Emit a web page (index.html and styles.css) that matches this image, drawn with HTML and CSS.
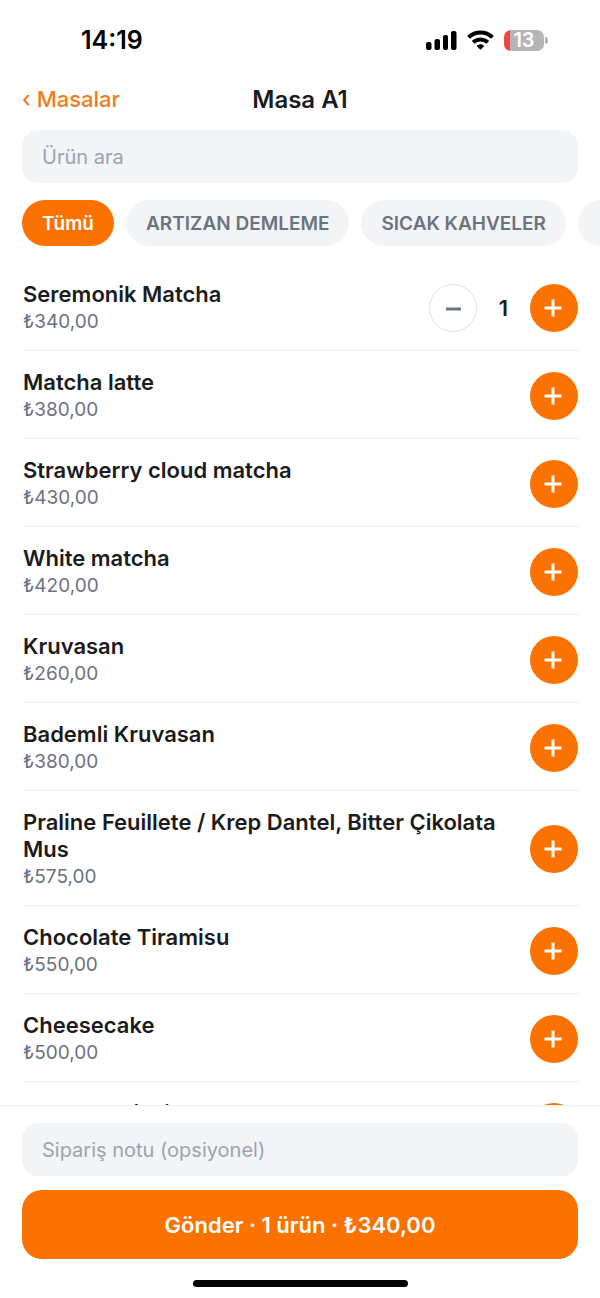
FILE: index.html
```html
<!DOCTYPE html>
<html lang="tr">
<head>
  <meta charset="UTF-8">
  <meta name="viewport" content="width=device-width, initial-scale=1">
  <title>Masa A1</title>
  <link rel="stylesheet" href="styles.css">
</head>
<body>
  <div class="app">
    <!-- Status bar -->
    <div class="status-bar">
      <span class="clock">14:19</span>
      <div class="status-icons">
        <svg width="31" height="20" viewBox="0 0 31 20" aria-hidden="true">
          <rect x="0" y="12" width="5.5" height="8" rx="2"/>
          <rect x="8.5" y="9" width="5.5" height="11" rx="2"/>
          <rect x="17" y="5" width="5" height="15" rx="2"/>
          <rect x="25" y="1" width="5.5" height="19" rx="2"/>
        </svg>
        <svg width="27" height="20" viewBox="0 0 27 20" aria-hidden="true">
          <g fill="none" stroke="#000" stroke-width="4">
            <path d="M1.6 7.4a17 17 0 0 1 23.8 0"/>
            <path d="M6.2 12.4a10.4 10.4 0 0 1 14.6 0"/>
          </g>
          <path d="M13.5 19.8 9.6 15.9a5.6 5.6 0 0 1 7.8 0z"/>
        </svg>
        <div class="battery">
          <span class="battery-body">13</span>
          <span class="battery-cap"></span>
        </div>
      </div>
    </div>

    <!-- Header -->
    <header class="header">
      <a href="#" class="back">‹ Masalar</a>
      <h1>Masa A1</h1>
    </header>

    <div class="search">
      <input type="search" class="field" placeholder="Ürün ara" aria-label="Ürün ara">
    </div>

    <!-- Categories -->
    <nav class="categories">
      <button type="button" class="chip active">Tümü</button>
      <button type="button" class="chip">ARTIZAN DEMLEME</button>
      <button type="button" class="chip">SICAK KAHVELER</button>
      <button type="button" class="chip" aria-label="Diğer"></button>
    </nav>

    <!-- Products -->
    <ul class="products">
      <li class="product">
        <div class="info">
          <h2>Seremonik Matcha</h2>
          <p>₺340,00</p>
        </div>
        <div class="counter">
          <button type="button" class="round minus" aria-label="Azalt"><svg width="16" height="18" viewBox="0 0 16 18"><path d="M1 10h15"/></svg></button>
          <span class="count">1</span>
          <button type="button" class="round plus" aria-label="Ekle"><svg width="20" height="18" viewBox="0 0 20 18"><path d="M.5 9h17M9 .5v17"/></svg></button>
        </div>
      </li>
      <li class="product">
        <div class="info">
          <h2>Matcha latte</h2>
          <p>₺380,00</p>
        </div>
        <button type="button" class="round plus" aria-label="Ekle"><svg width="20" height="18" viewBox="0 0 20 18"><path d="M.5 9h17M9 .5v17"/></svg></button>
      </li>
      <li class="product">
        <div class="info">
          <h2>Strawberry cloud matcha</h2>
          <p>₺430,00</p>
        </div>
        <button type="button" class="round plus" aria-label="Ekle"><svg width="20" height="18" viewBox="0 0 20 18"><path d="M.5 9h17M9 .5v17"/></svg></button>
      </li>
      <li class="product">
        <div class="info">
          <h2>White matcha</h2>
          <p>₺420,00</p>
        </div>
        <button type="button" class="round plus" aria-label="Ekle"><svg width="20" height="18" viewBox="0 0 20 18"><path d="M.5 9h17M9 .5v17"/></svg></button>
      </li>
      <li class="product">
        <div class="info">
          <h2>Kruvasan</h2>
          <p>₺260,00</p>
        </div>
        <button type="button" class="round plus" aria-label="Ekle"><svg width="20" height="18" viewBox="0 0 20 18"><path d="M.5 9h17M9 .5v17"/></svg></button>
      </li>
      <li class="product">
        <div class="info">
          <h2>Bademli Kruvasan</h2>
          <p>₺380,00</p>
        </div>
        <button type="button" class="round plus" aria-label="Ekle"><svg width="20" height="18" viewBox="0 0 20 18"><path d="M.5 9h17M9 .5v17"/></svg></button>
      </li>
      <li class="product">
        <div class="info">
          <h2>Praline Feuillete / Krep Dantel, Bitter Çikolata Mus</h2>
          <p>₺575,00</p>
        </div>
        <button type="button" class="round plus" aria-label="Ekle"><svg width="20" height="18" viewBox="0 0 20 18"><path d="M.5 9h17M9 .5v17"/></svg></button>
      </li>
      <li class="product">
        <div class="info">
          <h2>Chocolate Tiramisu</h2>
          <p>₺550,00</p>
        </div>
        <button type="button" class="round plus" aria-label="Ekle"><svg width="20" height="18" viewBox="0 0 20 18"><path d="M.5 9h17M9 .5v17"/></svg></button>
      </li>
      <li class="product">
        <div class="info">
          <h2>Cheesecake</h2>
          <p>₺500,00</p>
        </div>
        <button type="button" class="round plus" aria-label="Ekle"><svg width="20" height="18" viewBox="0 0 20 18"><path d="M.5 9h17M9 .5v17"/></svg></button>
      </li>
      <li class="product">
        <div class="info">
          <h2>Cream su / Midye el</h2>
          <p>₺500,00</p>
        </div>
        <button type="button" class="round plus" aria-label="Ekle"><svg width="20" height="18" viewBox="0 0 20 18"><path d="M.5 9h17M9 .5v17"/></svg></button>
      </li>
    </ul>

    <!-- Order -->
    <footer class="order">
      <input type="text" class="field" placeholder="Sipariş notu (opsiyonel)" aria-label="Sipariş notu">
      <button type="button" class="send">Gönder · 1 ürün · ₺340,00</button>
      <div class="home-bar"></div>
    </footer>
  </div>
</body>
</html>
```

FILE: styles.css
```css
* {
  box-sizing: border-box;
}

body {
  margin: 0;
  background: #fff;
  color: #1c1c1e;
  font-family: Inter, "Liberation Sans", sans-serif;
}

h1, h2, p, ul {
  margin: 0;
  padding: 0;
}

button, input {
  font-family: inherit;
  border: none;
}

button {
  cursor: pointer;
}

.app {
  display: flex;
  flex-direction: column;
  height: 100vh;
}

.status-bar {
  display: flex;
  align-items: center;
  justify-content: space-between;
  height: 80px;
  padding: 0 52px 0 81px;
  flex-shrink: 0;
  color: #000;
}

.clock {
  font-size: 25px;
  font-weight: 600;
}

.status-icons {
  display: flex;
  align-items: center;
  gap: 10px;
}

.battery {
  display: flex;
  align-items: center;
  gap: 1px;
}

.battery-body {
  width: 40px;
  height: 21px;
  border-radius: 7px;
  background: linear-gradient(to right, #f4433c 6px, #b5b5b5 6px);
  color: #fff;
  font-size: 20px;
  font-weight: 600;
  line-height: 21px;
  text-align: center;
}

.battery-cap {
  width: 3px;
  height: 7px;
  border-radius: 0 3px 3px 0;
  background: #b5b5b5;
}

.header {
  display: grid;
  grid-template-columns: 1fr auto 1fr;
  align-items: center;
  padding: 0 22px;
  height: 38px;
  margin-bottom: 12px;
  flex-shrink: 0;
}

.back {
  color: #f07c1c;
  font-size: 22px;
  font-weight: 500;
  text-decoration: none;
}

.header h1 {
  font-size: 24px;
  font-weight: 600;
}

.search {
  padding: 0 22px;
}

.field {
  display: block;
  width: 100%;
  height: 53px;
  padding: 0 20px;
  border-radius: 16px;
  background: #f3f4f6;
  color: #1c1c1e;
  font-size: 20px;
  appearance: none;
}

.field::placeholder {
  color: #9ca3af;
}

.categories {
  display: flex;
  gap: 12px;
  padding: 17px 0 17px 22px;
  overflow: hidden;
  flex-shrink: 0;
}

.chip {
  flex-shrink: 0;
  min-width: 92px;
  height: 46px;
  padding: 0 20px;
  border-radius: 23px;
  background: #f3f4f6;
  color: #6b7280;
  font-size: 19px;
  font-weight: 600;
}

.chip.active {
  background: #fb7200;
  color: #fff;
}

.products {
  flex: 1;
  min-height: 0;
  padding: 0 22px 0 23px;
  overflow-y: auto;
  scrollbar-width: none;
  list-style: none;
}

.product {
  display: flex;
  align-items: center;
  justify-content: space-between;
  gap: 24px;
  padding: 18px 0 16px;
  border-bottom: 1px solid #eeeff1;
}

.info h2 {
  font-size: 22px;
  font-weight: 600;
  line-height: 27px;
}

.info p {
  margin-top: 2px;
  color: #6b7280;
  font-size: 19px;
  line-height: 24px;
}

.counter {
  display: flex;
  align-items: center;
}

.count {
  width: 53px;
  font-size: 22px;
  font-weight: 600;
  text-align: center;
}

.round {
  display: flex;
  align-items: center;
  justify-content: center;
  flex-shrink: 0;
  width: 48px;
  height: 48px;
  padding: 0;
  border-radius: 50%;
}

.round svg {
  fill: none;
  stroke: currentColor;
  stroke-width: 3;
}

.plus {
  background: #fb7200;
  color: #fff;
}

.minus {
  border: 1px solid #e2e3e7;
  background: #fff;
  color: #6b7280;
}

.order {
  display: flex;
  flex-direction: column;
  gap: 14px;
  padding: 17px 22px 11px;
  border-top: 1px solid #eeeff1;
  background: #fff;
  flex-shrink: 0;
}

.send {
  height: 69px;
  border-radius: 20px;
  background: #fb7200;
  color: #fff;
  font-size: 22px;
  font-weight: 600;
}

.home-bar {
  align-self: center;
  width: 215px;
  height: 7px;
  margin-top: 7px;
  border-radius: 4px;
  background: #000;
}
```
